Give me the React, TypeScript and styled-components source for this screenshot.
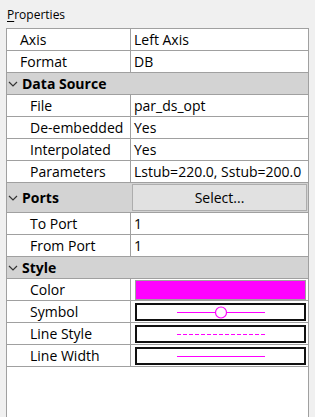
import styled, { createGlobalStyle } from "styled-components"

const font = `"Open Sans", "Noto Sans", sans-serif`

const Global = createGlobalStyle`
    html, body {
        margin: 0;
        padding: 0;
        background: #f0f0f0;
        height: 100%;
        overflow: hidden;
    }
    body {
        font-family: ${font};
    }
`

const Panel = styled.div`
    display: flex;
    flex-direction: column;
    height: 417px;
    padding: 0 6px 0 6px;
    box-sizing: border-box;
`

const Caption = styled.div`
    font-size: 12px;
    height: 28px;
    line-height: 30px;
    padding-left: 1px;
    color: #000;
    u {
        text-decoration: underline;
        text-underline-offset: 2px;
    }
`

const Grid = styled.div`
    flex: 1;
    width: 303px;
    background: #fff;
    border: 1px solid #a0a0a0;
    border-bottom: none;
    box-sizing: border-box;
    display: flex;
    flex-direction: column;
`

const Row = styled.div`
    display: flex;
    height: 22px;
    box-sizing: border-box;
    border-bottom: 1px solid #a0a0a0;
    font-size: 14px;
    color: #000;
`

const Name = styled.div<{ $indent: number }>`
    width: 124px;
    box-sizing: border-box;
    padding-left: ${(p) => p.$indent}px;
    border-right: 1px solid #a0a0a0;
    display: flex;
    align-items: center;
    white-space: nowrap;
    overflow: hidden;
`

const Value = styled.div`
    flex: 1;
    padding-left: 3px;
    display: flex;
    align-items: center;
    white-space: nowrap;
    overflow: hidden;
`

const GroupRow = styled.div<{ $tall?: boolean }>`
    display: flex;
    height: ${(p) => (p.$tall ? 30 : 22)}px;
    box-sizing: border-box;
    border-bottom: 1px solid #a0a0a0;
    background: #d3d3d3;
    font-size: 14px;
    font-weight: 700;
`

const GroupTitle = styled.div`
    width: 125px;
    display: flex;
    align-items: center;
    gap: 4px;
    padding-left: 1px;
    box-sizing: border-box;
`

const GroupValue = styled.div`
    flex: 1;
    display: flex;
    align-items: stretch;
    padding: 1px 1px 1px 0;
`

const SelectButton = styled.button`
    flex: 1;
    background: #e1e1e1;
    border: 1px solid #adadad;
    font-family: ${font};
    font-size: 14px;
    font-weight: 400;
    color: #000;
    padding: 0;
`

const Swatch = styled.div<{ $color: string }>`
    flex: 1;
    height: 18px;
    margin: 0 2px 0 1px;
    background: ${(p) => p.$color};
    border: 1px solid #a0a0a0;
`

const LineBox = styled.div`
    flex: 1;
    height: 18px;
    margin: 0 2px 0 1px;
    border: 2px solid #111;
    box-sizing: border-box;
    display: flex;
    align-items: center;
    justify-content: center;
`

const Chevron = () => (
    <svg width="10" height="8" viewBox="0 0 10 8">
        <path d="M1 2 L5 6 L9 2" fill="none" stroke="#333" strokeWidth="1.2" />
    </svg>
)

const Group = ({ title, children }: { title: string; children?: React.ReactNode }) => (
    <GroupRow $tall={!!children}>
        <GroupTitle>
            <Chevron />
            {title}
        </GroupTitle>
        {children && <GroupValue>{children}</GroupValue>}
    </GroupRow>
)

const Prop = ({ name, value, indent = 13, children }: { name: string; value?: string; indent?: number; children?: React.ReactNode }) => (
    <Row>
        <Name $indent={indent}>{name}</Name>
        <Value>{children ?? value}</Value>
    </Row>
)

export default function App() {
    return (
        <Panel>
            <Global />
            <Caption>
                <u>P</u>roperties
            </Caption>
            <Grid>
                <Prop name="Axis" value="Left Axis" />
                <Prop name="Format" value="DB" />
                <Group title="Data Source" />
                <Prop name="File" value="par_ds_opt" indent={23} />
                <Prop name="De-embedded" value="Yes" indent={23} />
                <Prop name="Interpolated" value="Yes" indent={23} />
                <Prop name="Parameters" value="Lstub=220.0, Sstub=200.0" indent={23} />
                <Group title="Ports">
                    <SelectButton>Select...</SelectButton>
                </Group>
                <Prop name="To Port" value="1" indent={23} />
                <Prop name="From Port" value="1" indent={23} />
                <Group title="Style" />
                <Prop name="Color" indent={23}>
                    <Swatch $color="#ff00ff" />
                </Prop>
                <Prop name="Symbol" indent={23}>
                    <LineBox>
                        <svg width="88" height="14" viewBox="0 0 88 14">
                            <line x1="0" y1="7.5" x2="38" y2="7.5" stroke="#ff00ff" strokeWidth="1" />
                            <line x1="50" y1="7.5" x2="88" y2="7.5" stroke="#ff00ff" strokeWidth="1" />
                            <circle cx="44" cy="7.5" r="5.5" fill="none" stroke="#ff00ff" strokeWidth="1.2" />
                        </svg>
                    </LineBox>
                </Prop>
                <Prop name="Line Style" indent={23}>
                    <LineBox>
                        <svg width="88" height="4" viewBox="0 0 88 4">
                            <line x1="0" y1="2.5" x2="88" y2="2.5" stroke="#ff00ff" strokeWidth="1" strokeDasharray="4 2" />
                        </svg>
                    </LineBox>
                </Prop>
                <Prop name="Line Width" indent={23}>
                    <LineBox>
                        <svg width="88" height="4" viewBox="0 0 88 4">
                            <line x1="0" y1="2.5" x2="88" y2="2.5" stroke="#ff00ff" strokeWidth="1" />
                        </svg>
                    </LineBox>
                </Prop>
            </Grid>
        </Panel>
    )
}
